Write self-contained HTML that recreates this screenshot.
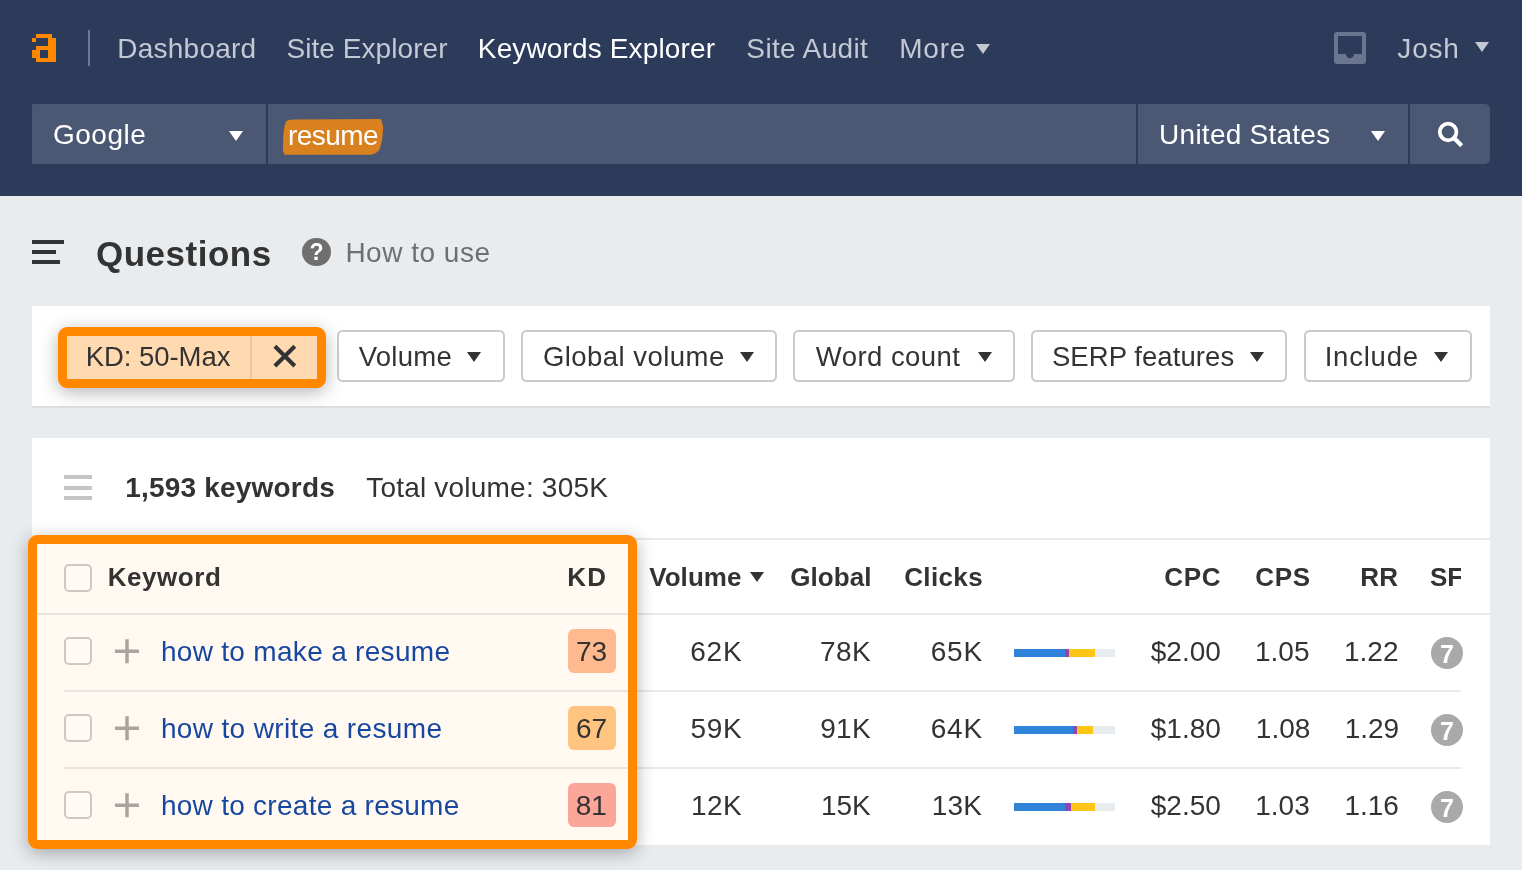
<!DOCTYPE html>
<html>
<head>
<meta charset="utf-8">
<title>Keywords Explorer</title>
<style>
*{box-sizing:border-box;margin:0;padding:0}
html,body{width:1522px;height:870px;overflow:hidden}
body{background:#e9ecef;font-family:"Liberation Sans",sans-serif;position:relative;color:#333}
.abs{position:absolute}
.t{position:absolute;white-space:nowrap;line-height:1}
.r{position:absolute;white-space:nowrap;line-height:1;text-align:right}
#nav{position:absolute;left:0;top:0;width:1522px;height:196px;background:#2b3b59}
.navt{font-size:28px;color:#c3c8d3}
.sb{position:absolute;top:104px;height:60px;background:#4a5873}
.sbt{font-size:28px;color:#fff}
.panel{position:absolute;background:#fff}
.fb{position:absolute;top:330px;height:52px;border:2px solid #cacaca;border-radius:5.500px;background:#fff}
.fbt{font-size:27.500px;color:#333}
.tri{position:absolute;width:0;height:0;border-left:7.700px solid transparent;border-right:7.700px solid transparent;border-top:10px solid #333}
.th{font-size:26px;font-weight:bold;color:#333}
.td{font-size:28px;color:#333}
.kw{font-size:28px;color:#17479e}
.cb{position:absolute;left:64px;width:28px;height:28px;border:2px solid #cdc8c4;border-radius:5px;background:#fffaf6}
.kd{position:absolute;left:568px;width:48px;height:44px;border-radius:6px}
.hl{position:absolute;height:2px;background:#e8e9ec}
.sf{position:absolute;left:1431px;width:32px;height:32px;border-radius:50%;background:#a9a9a9}
.obox{position:absolute;border:9px solid #ff8800;border-radius:9px;box-shadow:0 4px 18px rgba(0,0,0,.3)}
</style>
</head>
<body>
<div id="wrap" style="position:absolute;left:0;top:0;width:1522px;height:870px;will-change:transform">
<div id="nav"></div>

<!-- logo -->
<svg class="abs" style="left:32px;top:34px" width="24" height="28" viewBox="0 0 6 7" shape-rendering="crispEdges">
<path fill="#ff8800" fill-rule="evenodd" d="M1 0h4v1h1v6h-5v-1h-1v-2h1v-1h3v-2h-3zM0 1h1v1h-1zM2 4h2v2h-2z"/>
</svg>
<div class="abs" style="left:88px;top:30px;width:2px;height:36px;background:#6b7a99"></div>

<div class="t navt" id="n1" style="left:117.350px;top:35px;letter-spacing:0.219px">Dashboard</div>
<div class="t navt" id="n2" style="left:286.450px;top:35px;letter-spacing:0.063px">Site Explorer</div>
<div class="t navt" id="n3" style="left:477.850px;top:35px;letter-spacing:0.137px;color:#fff">Keywords Explorer</div>
<div class="t navt" id="n4" style="left:746.350px;top:35px;letter-spacing:0.356px">Site Audit</div>
<div class="t navt" id="n5" style="left:899.250px;top:35px;letter-spacing:0.750px">More</div>
<div class="tri" style="left:976px;top:44px;border-top-color:#c3c8d3"></div>
<!-- inbox icon -->
<svg class="abs" style="left:1334px;top:32px" width="32" height="32" viewBox="0 0 32 32">
<path fill="#6a758f" fill-rule="evenodd" d="M3 0h26a3 3 0 0 1 3 3v26a3 3 0 0 1-3 3h-26a3 3 0 0 1-3-3v-26a3 3 0 0 1 3-3zM4 4v18h8a4 4.300 0 0 0 8 0h8v-18z"/>
</svg>
<div class="t navt" id="n6" style="left:1397.350px;top:35px;letter-spacing:0.800px">Josh</div>
<div class="tri" style="left:1474.500px;top:42px;border-top-color:#c3c8d3"></div>

<!-- search bar -->
<div class="sb" style="left:32px;width:234px;border-radius:1px 0 0 1px"></div>
<div class="sb" style="left:268px;width:868px"></div>
<div class="sb" style="left:1138px;width:270px"></div>
<div class="sb" style="left:1410px;width:80px;border-radius:0 5px 5px 0"></div>
<div class="t sbt" id="s1" style="left:53px;top:121px;letter-spacing:0.490px">Google</div>
<div class="tri" style="left:228.500px;top:130.500px;border-top-color:#fff"></div>
<svg class="abs" style="left:278px;top:114px" width="112" height="46" viewBox="278 114 112 46">
<path fill="#d9801f" d="M294.800 119.500L380.300 119.100L381.600 120.600L383.200 127.200L382.200 139.200L379.600 149.400L376 153L370.900 154.800L284.300 154.800L282.900 150.300L283.200 137.500L284.400 126.400L286 121.500L289 119.900z"/>
</svg>
<div class="t sbt" id="s2" style="left:287.900px;top:122px;letter-spacing:-0.530px">resume</div>
<div class="t sbt" id="s3" style="left:1159.100px;top:121px;letter-spacing:0.250px">United States</div>
<div class="tri" style="left:1370.500px;top:130.500px;border-top-color:#fff"></div>
<svg class="abs" style="left:1434px;top:118px" width="34" height="34" viewBox="1434 118 34 34">
<circle cx="1448.100" cy="132" r="8.300" fill="none" stroke="#fff" stroke-width="3.800"/>
<path d="M1453.600 137.600L1461.700 145.700" stroke="#fff" stroke-width="4.300" stroke-linecap="butt"/>
</svg>

<!-- title -->
<div class="abs" style="left:32px;top:240px;width:32px;height:4px;background:#333"></div>
<div class="abs" style="left:32px;top:250px;width:24px;height:4px;background:#333"></div>
<div class="abs" style="left:32px;top:260px;width:28px;height:4px;background:#333"></div>
<div class="t " id="q1" style="left:95.950px;top:236px;letter-spacing:0.518px;font-size:35px;font-weight:bold;color:#333">Questions</div>
<div class="abs" style="left:302.200px;top:238px;width:28.400px;height:28.400px;border-radius:50%;background:#6f6f6f"></div>
<div class="t " id="qm" style="left:309.600px;top:241px;font-size:23px;font-weight:bold;color:#fff">?</div>
<div class="t " id="q2" style="left:345.400px;top:239px;letter-spacing:0.500px;font-size:28px;color:#6f6f6f">How to use</div>

<!-- filter panel -->
<div class="panel" style="left:32px;top:306px;width:1458px;height:102px;border-bottom:2px solid #dcdfe2"></div>
<div class="obox" style="left:58px;top:327px;width:268px;height:61px;background:#ffd9b0"></div>
<div class="abs" style="left:250px;top:336px;width:2px;height:43px;background:#ecc8a2"></div>
<div class="t fbt" id="f0" style="left:85.650px;top:343px;letter-spacing:-0.039px">KD: 50-Max</div>
<svg class="abs" style="left:270px;top:342px" width="30" height="28" viewBox="270 342 30 28">
<path d="M274.900 346.200L294.800 366M294.800 346.200L274.900 366" stroke="#333" stroke-width="4.100" fill="none"/>
</svg>

<div class="fb" style="left:337px;width:168px"></div>
<div class="t fbt" id="f1" style="left:358.750px;top:343px;letter-spacing:0.250px">Volume</div>
<div class="tri" style="left:467px;top:352px"></div>
<div class="fb" style="left:521px;width:256px"></div>
<div class="t fbt" id="f2" style="left:542.900px;top:343px;letter-spacing:0.467px">Global volume</div>
<div class="tri" style="left:739.500px;top:352px"></div>
<div class="fb" style="left:793px;width:222px"></div>
<div class="t fbt" id="f3" style="left:815.800px;top:343px;letter-spacing:0.450px">Word count</div>
<div class="tri" style="left:977.700px;top:352px"></div>
<div class="fb" style="left:1031px;width:256px"></div>
<div class="t fbt" id="f4" style="left:1051.900px;top:343px;letter-spacing:0.071px">SERP features</div>
<div class="tri" style="left:1250px;top:352px"></div>
<div class="fb" style="left:1304px;width:168px"></div>
<div class="t fbt" id="f5" style="left:1324.650px;top:343px;letter-spacing:0.792px">Include</div>
<div class="tri" style="left:1434.400px;top:352px"></div>

<!-- table panel -->
<div class="panel" style="left:32px;top:438px;width:1458px;height:407px"></div>
<div class="abs" style="left:64px;top:475.400px;width:28px;height:4px;background:#c5c5c5"></div>
<div class="abs" style="left:64px;top:485.500px;width:28px;height:4px;background:#c5c5c5"></div>
<div class="abs" style="left:64px;top:495.700px;width:28px;height:4px;background:#c5c5c5"></div>
<div class="t " id="k1" style="left:125.250px;top:474px;letter-spacing:0.192px;font-size:28px;font-weight:bold;color:#333">1,593 keywords</div>
<div class="t " id="k2" style="left:366.200px;top:474px;letter-spacing:0.209px;font-size:28px;color:#333">Total volume: 305K</div>

<div class="hl" style="left:32px;top:538px;width:1458px"></div>
<div class="hl" style="left:32px;top:613px;width:1458px"></div>
<div class="hl" style="left:64px;top:689.500px;width:1397px"></div>
<div class="hl" style="left:64px;top:766.500px;width:1397px"></div>
<!-- tint under highlighted area -->
<div class="abs" style="left:37px;top:544px;width:591px;height:296px;background:rgba(255,136,0,.05)"></div>

<div class="cb" style="top:564px"></div>
<div class="t th" id="h1" style="left:107.700px;top:564px;letter-spacing:0.550px">Keyword</div>
<div class="t th" id="h2" style="left:567.250px;top:564px;letter-spacing:1.300px">KD</div>
<div class="t th" id="h3" style="left:649.200px;top:564px;letter-spacing:0.060px">Volume</div>
<div class="tri" style="left:750.300px;top:572.200px"></div>
<div class="t th" id="h4" style="left:790.200px;top:564px;letter-spacing:0.090px">Global</div>
<div class="t th" id="h5" style="left:904.200px;top:564px;letter-spacing:0.370px">Clicks</div>
<div class="t th" id="h6" style="left:1164.150px;top:564px;letter-spacing:0.725px">CPC</div>
<div class="t th" id="h7" style="left:1255.200px;top:564px;letter-spacing:0.675px">CPS</div>
<div class="t th" id="h8" style="left:1360.200px;top:564px;letter-spacing:0.300px">RR</div>
<div class="abs" style="left:1425px;top:560px;width:36.300px;height:40px;overflow:hidden">
<div class="t th" id="h9" style="left:5px;top:4px">SF</div>
</div>
<div class="cb" style="top:637px"></div>
<svg class="abs" style="left:112.800px;top:637px" width="28" height="28" viewBox="0 0 28 28"><path d="M2 14.200H26M14 2.200V26.200" stroke="#aaa49f" stroke-width="3.500" fill="none"/></svg>
<div class="t kw" id="kw0" style="left:160.900px;top:638px;letter-spacing:0.310px">how to make a resume</div>
<div class="kd" style="top:629px;background:#ffb98e"></div>
<div class="t td" id="kd0" style="left:575.900px;top:638px">73</div>
<div class="r td" id="v0" style="right:779.725px;top:638px;letter-spacing:0.725px">62K</div>
<div class="r td" id="g0" style="right:650.975px;top:638px;letter-spacing:0.425px">78K</div>
<div class="r td" id="c0" style="right:539.200px;top:638px;letter-spacing:0.750px">65K</div>
<div class="abs" style="left:1014.200px;top:649.400px;width:101px;height:8px;background:#e8ecef"><div class="abs" style="left:0;top:0;height:8px;width:50.400px;background:#2f83d8"></div><div class="abs" style="left:50.400px;top:0;height:8px;width:4.200px;background:#9446b0"></div><div class="abs" style="left:54.600px;top:0;height:8px;width:26.200px;background:#fbc616"></div></div>
<div class="r td" id="p0" style="right:301.150px;top:638px">$2.00</div>
<div class="r td" id="s0x" style="right:212.550px;top:638px">1.05</div>
<div class="r td" id="r0" style="right:123.500px;top:638px">1.22</div>
<div class="sf" style="top:637px"></div>
<div class="t " id="sf0" style="left:1440.050px;top:642px;font-size:25px;font-weight:bold;color:#fff">7</div>
<div class="cb" style="top:714px"></div>
<svg class="abs" style="left:112.800px;top:714px" width="28" height="28" viewBox="0 0 28 28"><path d="M2 14.200H26M14 2.200V26.200" stroke="#aaa49f" stroke-width="3.500" fill="none"/></svg>
<div class="t kw" id="kw1" style="left:160.900px;top:715px;letter-spacing:0.359px">how to write a resume</div>
<div class="kd" style="top:706px;background:#ffc580"></div>
<div class="t td" id="kd1" style="left:575.900px;top:715px">67</div>
<div class="r td" id="v1" style="right:779.850px;top:715px;letter-spacing:0.600px">59K</div>
<div class="r td" id="g1" style="right:651.100px;top:715px;letter-spacing:0.300px">91K</div>
<div class="r td" id="c1" style="right:539.200px;top:715px;letter-spacing:0.750px">64K</div>
<div class="abs" style="left:1014.200px;top:726.400px;width:101px;height:8px;background:#e8ecef"><div class="abs" style="left:0;top:0;height:8px;width:58.400px;background:#2f83d8"></div><div class="abs" style="left:58.400px;top:0;height:8px;width:4px;background:#9446b0"></div><div class="abs" style="left:62.400px;top:0;height:8px;width:16.700px;background:#fbc616"></div></div>
<div class="r td" id="p1" style="right:301.150px;top:715px">$1.80</div>
<div class="r td" id="s1x" style="right:211.700px;top:715px">1.08</div>
<div class="r td" id="r1" style="right:122.850px;top:715px">1.29</div>
<div class="sf" style="top:714px"></div>
<div class="t " id="sf1" style="left:1440.050px;top:719px;font-size:25px;font-weight:bold;color:#fff">7</div>
<div class="cb" style="top:791px"></div>
<svg class="abs" style="left:112.800px;top:791px" width="28" height="28" viewBox="0 0 28 28"><path d="M2 14.200H26M14 2.200V26.200" stroke="#aaa49f" stroke-width="3.500" fill="none"/></svg>
<div class="t kw" id="kw2" style="left:160.900px;top:792px;letter-spacing:0.276px">how to create a resume</div>
<div class="kd" style="top:783px;background:#fca599"></div>
<div class="t td" id="kd2" style="left:575.650px;top:792px">81</div>
<div class="r td" id="v2" style="right:780.100px;top:792px;letter-spacing:0.350px">12K</div>
<div class="r td" id="g2" style="right:651.475px;top:792px;letter-spacing:-0.075px">15K</div>
<div class="r td" id="c2" style="right:539.650px;top:792px;letter-spacing:0.300px">13K</div>
<div class="abs" style="left:1014.200px;top:803.400px;width:101px;height:8px;background:#e8ecef"><div class="abs" style="left:0;top:0;height:8px;width:50.400px;background:#2f83d8"></div><div class="abs" style="left:50.400px;top:0;height:8px;width:6.200px;background:#9446b0"></div><div class="abs" style="left:56.600px;top:0;height:8px;width:24.200px;background:#fbc616"></div></div>
<div class="r td" id="p2" style="right:301.150px;top:792px">$2.50</div>
<div class="r td" id="s2x" style="right:212.250px;top:792px">1.03</div>
<div class="r td" id="r2" style="right:123.100px;top:792px">1.16</div>
<div class="sf" style="top:791px"></div>
<div class="t " id="sf2" style="left:1440.050px;top:796px;font-size:25px;font-weight:bold;color:#fff">7</div>

<!-- orange highlight box -->
<div class="obox" style="left:28px;top:535px;width:609px;height:314px"></div>
</div>
</body>
</html>
